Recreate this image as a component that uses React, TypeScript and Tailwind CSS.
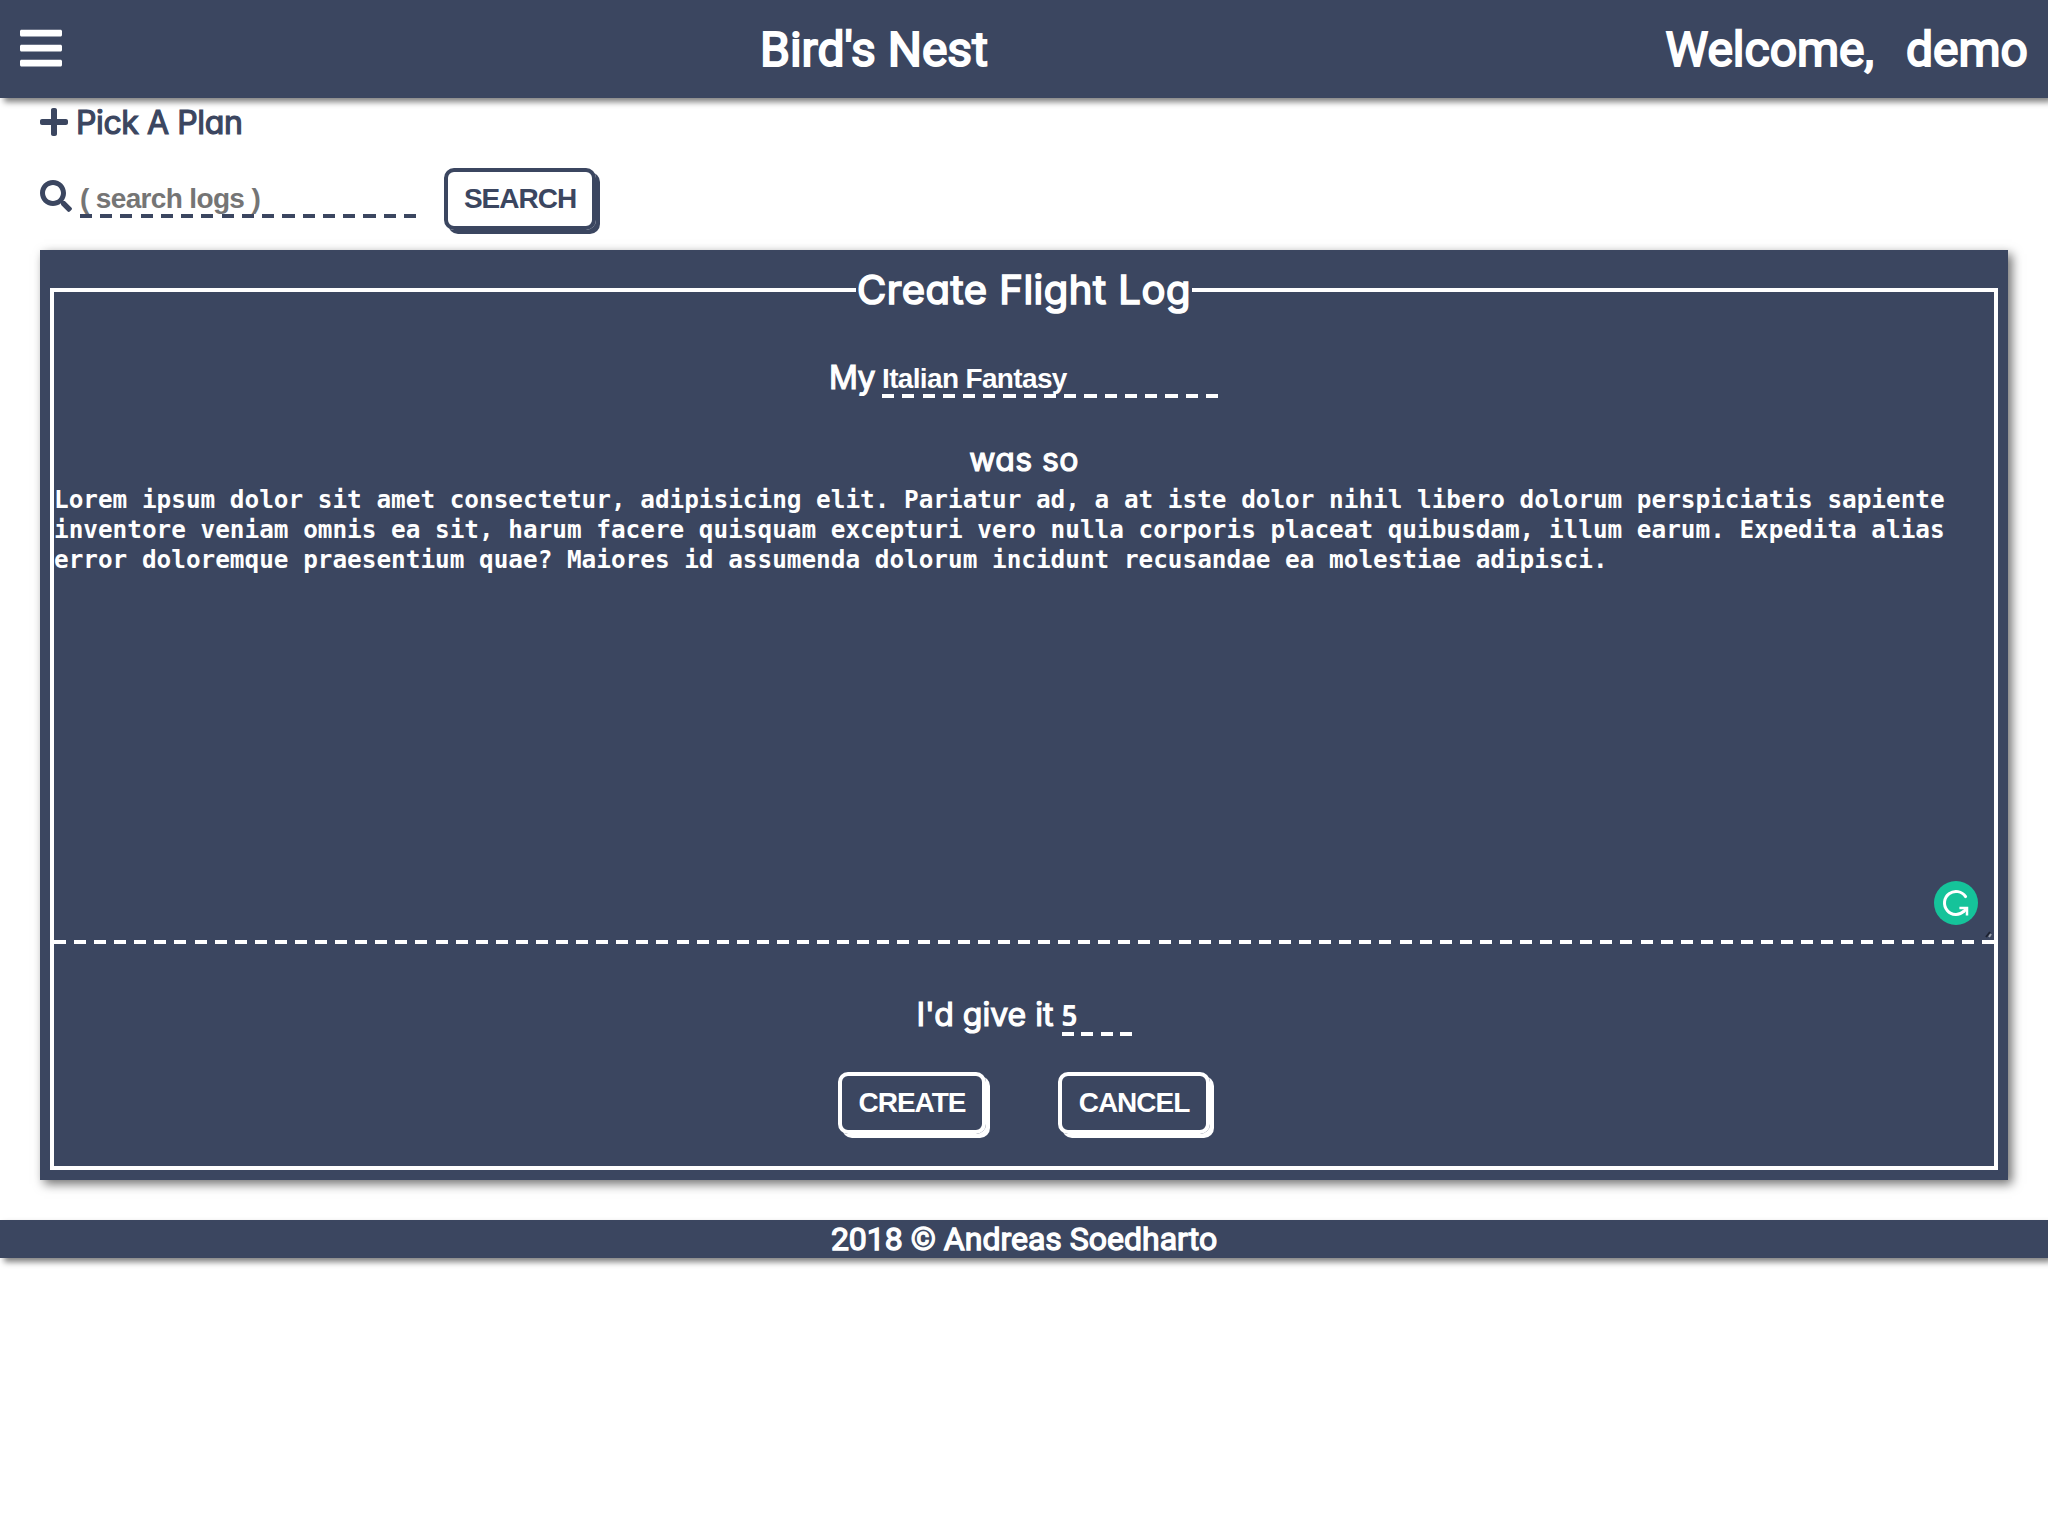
import type { ReactNode } from "react";
import { FaBars, FaPlus, FaSearch } from "react-icons/fa";

const rounded =
  "font-['Inter',sans-serif] font-normal [font-feature-settings:'cv11'] [-webkit-text-stroke:1.2px_currentColor]";
const roboto = "font-['Roboto',sans-serif] font-normal";
const arial = "font-['Liberation_Sans',Arial,sans-serif] text-[28px] font-bold";
const dashed =
  "bg-[repeating-linear-gradient(90deg,currentColor_0_12px,transparent_12px_20.25px)] bg-[length:100%_4px] bg-bottom bg-no-repeat pb-1";

function Button({ children, className }: { children: ReactNode; className: string }) {
  return (
    <button
      type="button"
      className={`${arial} h-[62px] shrink-0 rounded-[10px] border-4 border-current text-center leading-[30px] tracking-[-1px] whitespace-nowrap shadow-[4px_4px_0_currentColor] ${className}`}
    >
      {children}
    </button>
  );
}

function Header() {
  return (
    <header className="relative flex h-[98px] items-center bg-[#3b4660] pr-5 pl-[20px] text-white shadow-[4px_4px_6px_#808080]">
      <FaBars className="mb-[2px] h-[48px] w-[42px] shrink-0" />
      <h1 className={`${roboto} mt-px ml-[698px] text-[48px] leading-[58px] whitespace-pre [-webkit-text-stroke:2px_currentColor]`}>
        Bird's Nest
      </h1>
      <p className={`${roboto} mt-px ml-auto text-[48px] leading-[58px] whitespace-pre [-webkit-text-stroke:2px_currentColor]`}>
        Welcome,<span className="ml-[32px]">demo</span>
      </p>
    </header>
  );
}

function SearchBar() {
  return (
    <div className="mt-[26px] flex h-[62px]">
      <FaSearch className="mt-3 size-8 shrink-0" />
      <input
        aria-label="Search logs"
        placeholder="( search logs )"
        className={`${arial} ${dashed} mt-4 ml-2 h-[34px] w-[336px] tracking-[-0.65px] outline-none placeholder:text-[#757575] placeholder:opacity-100`}
      />
      <Button className="ml-7 w-[152px]">SEARCH</Button>
    </div>
  );
}

function GrammarBadge() {
  return (
    <svg viewBox="0 0 44 44" className="absolute top-[396px] left-[1880px] size-11">
      <circle cx="22" cy="22" r="22" fill="#15c39a" />
      <path d="M31.6 15.6A11.5 11.5 0 1 0 30 30.2" fill="none" stroke="#fff" strokeWidth="3" strokeLinecap="round" />
      <path d="M25.4 27H33V34.6M32.6 27.4L29 31.4" fill="none" stroke="#fff" strokeWidth="2.5" />
    </svg>
  );
}

const logText =
  "Lorem ipsum dolor sit amet consectetur, adipisicing elit. Pariatur ad, a at iste dolor nihil libero dolorum perspiciatis sapiente inventore veniam omnis ea sit, harum facere quisquam excepturi vero nulla corporis placeat quibusdam, illum earum. Expedita alias error doloremque praesentium quae? Maiores id assumenda dolorum incidunt recusandae ea molestiae adipisci.";

function LogForm() {
  return (
    <form className="mt-5 h-[930px] bg-[#3b4660] px-[10px] pt-[10px] pb-[10px] text-white shadow-[4px_4px_10px_#707070]">
      <div className="mt-[28px] h-[882px] border-4 border-white">
        <div className="flex h-0 justify-center">
          <h2 className={`${rounded} -mt-[32px] h-[60px] w-[336px] bg-[#3b4660] text-center text-[40px] leading-[60px] tracking-[0.5px] whitespace-nowrap [-webkit-text-stroke:1.7px_currentColor]`}>
            Create Flight Log
          </h2>
        </div>
        <label className="flex h-[106px] pt-[62px] pl-[775px]">
          <span className={`${rounded} w-[53px] text-[32px] leading-[48px] tracking-[-0.5px] whitespace-nowrap`}>My</span>
          <input
            defaultValue="Italian Fantasy"
            className={`${arial} ${dashed} mt-[10px] h-[34px] w-[336px] tracking-[-0.65px] outline-none`}
          />
        </label>
        <div className={`${rounded} mt-[37px] h-[50px] text-center text-[32px] leading-[50px] tracking-[0.4px]`}>was so</div>
        <div className="relative h-[459px]">
          <textarea
            aria-label="Flight log"
            defaultValue={logText}
            spellCheck={false}
            className="block h-[459px] w-[1940px] resize-none overflow-hidden bg-[repeating-linear-gradient(90deg,currentColor_0_12px,transparent_12px_20.083px)] bg-[length:100%_4px] bg-bottom bg-no-repeat p-0 pr-[30px] font-['DejaVu_Sans_Mono',monospace] text-[24.35px] leading-[30px] font-bold outline-none"
          />
          <GrammarBadge />
          <svg viewBox="0 0 8 8" className="absolute right-[1px] bottom-[5px] size-2">
            <path d="M1 6L5 1" stroke="#1c2130" strokeWidth="2" />
            <path d="M4 6L6 3" stroke="#9a9faa" strokeWidth="2" />
          </svg>
        </div>
        <label className="mt-[47px] flex h-[49px] justify-center">
          <span className={`${rounded} w-[145px] text-[32px] leading-[48px] whitespace-nowrap`}>I'd give it</span>
          <input
            defaultValue="5"
            className="mt-[7px] h-[38px] w-[70px] bg-[repeating-linear-gradient(90deg,currentColor_0_12px,transparent_12px_19.33px)] bg-[length:100%_4px] bg-bottom bg-no-repeat pb-[5px] font-['Open_Sans',sans-serif] text-[28px] leading-[32px] font-bold outline-none"
          />
        </label>
        <div className="mt-8 flex gap-[72px] pl-[784px]">
          <Button className="w-[148px]">CREATE</Button>
          <Button className="w-[152px]">CANCEL</Button>
        </div>
      </div>
    </form>
  );
}

export default function App() {
  return (
    <div className="min-h-[1536px] w-[2048px] overflow-hidden bg-white text-[#3b4660]">
      <Header />
      <main className="px-10">
        <div className="flex h-[44px] items-end pt-2">
          <FaPlus className="mb-1 h-8 w-7 shrink-0" />
          <span className={`${rounded} -mb-px ml-[8px] text-[32px] leading-[40px] tracking-[-0.4px] whitespace-nowrap`}>Pick A Plan</span>
        </div>
        <SearchBar />
        <LogForm />
      </main>
      <footer className={`${roboto} mt-10 h-[38px] bg-[#3b4660] text-center text-[32px] leading-[38px] text-white shadow-[4px_4px_6px_#808080] [-webkit-text-stroke:1.3px_currentColor]`}>
        2018 © Andreas Soedharto
      </footer>
    </div>
  );
}
